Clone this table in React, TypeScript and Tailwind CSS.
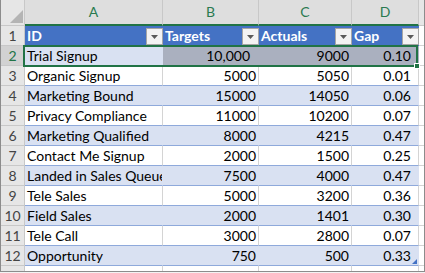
import React from 'react'

type Row = { id: string; targets: string; actuals: string; gap: string }

const rows: Row[] = [
  { id: 'Trial Signup', targets: '10,000', actuals: '9000', gap: '0.10' },
  { id: 'Organic Signup', targets: '5000', actuals: '5050', gap: '0.01' },
  { id: 'Marketing Bound', targets: '15000', actuals: '14050', gap: '0.06' },
  { id: 'Privacy Compliance', targets: '11000', actuals: '10200', gap: '0.07' },
  { id: 'Marketing Qualified', targets: '8000', actuals: '4215', gap: '0.47' },
  { id: 'Contact Me Signup', targets: '2000', actuals: '1500', gap: '0.25' },
  { id: 'Landed in Sales Queue', targets: '7500', actuals: '4000', gap: '0.47' },
  { id: 'Tele Sales', targets: '5000', actuals: '3200', gap: '0.36' },
  { id: 'Field Sales', targets: '2000', actuals: '1401', gap: '0.30' },
  { id: 'Tele Call', targets: '3000', actuals: '2800', gap: '0.07' },
  { id: 'Opportunity', targets: '750', actuals: '500', gap: '0.33' },
]

function FilterButton() {
  return (
    <div className="absolute right-0 top-[2px] w-[17px] h-[17px] bg-[#f3f3f3] border border-[#a6a6a6] flex items-center justify-center">
      <svg width="7" height="4" viewBox="0 0 7 4">
        <path d="M0 0h7L3.5 4z" fill="#5a5a5a" />
      </svg>
    </div>
  )
}

function HeaderCell({ label, w }: { label: string; w: string }) {
  return (
    <div className={`relative ${w} h-[20px] bg-[#4472c4] border-b border-[#4472c4] pl-[2px] text-white font-bold leading-[20px] overflow-hidden`}>
      {label}
      <FilterButton />
    </div>
  )
}

export default function App() {
  return (
    <div
      className="relative w-[425px] h-[273px] bg-[#f3f3f3] overflow-hidden text-[14px] text-black"
      style={{ fontFamily: 'Lato, "Liberation Sans", sans-serif' }}
    >
      <div className="w-[425px] h-[272px] border-l border-r border-b border-[#8c8c8c] bg-white overflow-hidden">
        {/* column letters */}
        <div className="flex h-[26px] bg-[#e6e6e6]">
          <div className="relative w-[24px] border-r border-b border-[#c8c8c8]">
            <svg className="absolute left-[9px] top-[10px]" width="13" height="13" viewBox="0 0 13 13">
              <path d="M13 0v13H0z" fill="#b4b4b4" />
            </svg>
          </div>
          {[
            ['A', 'w-[138px]'],
            ['B', 'w-[96px]'],
            ['C', 'w-[93px]'],
            ['D', 'w-[67px]'],
          ].map(([l, w]) => (
            <div
              key={l}
              className={`${w} flex items-end justify-center pb-[3px] leading-[18px] bg-[#dedede] text-[#2a7a50] border-r border-[#c8c8c8] border-b-2 border-b-[#217346]`}
            >
              {l}
            </div>
          ))}
          <div className="flex-1 border-b border-[#c8c8c8]" />
        </div>

        {/* header row */}
        <div className="flex h-[20px]">
          <div className="w-[24px] bg-[#e6e6e6] border-r border-b border-[#c8c8c8] text-center leading-[20px] text-[#444]">1</div>
          <HeaderCell label="ID" w="w-[138px]" />
          <HeaderCell label="Targets" w="w-[96px]" />
          <HeaderCell label="Actuals" w="w-[93px]" />
          <HeaderCell label="Gap" w="w-[67px]" />
          <div className="flex-1 border-b border-[#d4d4d4]" />
        </div>

        {rows.map((r, i) => {
          const band = i % 2 === 0
          const selected = i === 0
          const cell = band ? 'bg-[#d9e1f2] border-r-[#d9e1f2]' : 'bg-white border-r-[#d4d4d4]'
          const sel = selected ? 'bg-[#aab0bf] border-r-[#aab0bf]' : cell
          return (
            <div key={r.id} className="flex h-[20px] leading-[20px]">
              <div
                className={`w-[24px] border-r border-b border-[#c8c8c8] text-center ${selected ? 'bg-[#d2d2d2] text-[#217346]' : 'bg-[#e6e6e6] text-[#444]'}`}
              >
                {i + 2}
              </div>
              <div className={`w-[138px] pl-[2px] whitespace-nowrap overflow-hidden border-r border-b border-b-[#8ea9db] ${cell}`}>
                {r.id}
              </div>
              <div className={`w-[96px] text-right ${selected ? 'pr-[8px]' : 'pr-[2px]'} border-r border-b border-b-[#8ea9db] ${sel}`}>
                {r.targets}
              </div>
              <div className={`w-[93px] text-right pr-[2px] border-r border-b border-b-[#8ea9db] ${sel}`}>
                {r.actuals}
              </div>
              <div className={`w-[67px] text-right pr-[7px] border-r border-b border-b-[#8ea9db] ${sel} ${selected ? '' : 'border-r-[#8ea9db]'}`}>
                {r.gap}
              </div>
              <div className="flex-1 border-b border-[#d4d4d4]" />
            </div>
          )
        })}

        {/* partial next row */}
        <div className="flex h-[6px]">
          <div className="w-[24px] bg-[#e6e6e6] border-r border-[#c8c8c8]" />
          <div className="w-[138px] border-r border-[#d4d4d4]" />
          <div className="w-[96px] border-r border-[#d4d4d4]" />
          <div className="w-[93px] border-r border-[#d4d4d4]" />
          <div className="w-[67px] border-r border-[#d4d4d4]" />
        </div>
      </div>

      {/* selection box A2:D2 */}
      <div className="absolute left-[23px] top-[45px] w-[395px] h-[22px] border-2 border-[#217346]" />
      <div className="absolute left-[414px] top-[63px] w-[6px] h-[6px] bg-[#217346] border border-white" />

      {/* table resize handle */}
      <svg className="absolute left-[412px] top-[259px]" width="5" height="5" viewBox="0 0 5 5">
        <path d="M5 0v5H0z" fill="#4472c4" />
      </svg>
    </div>
  )
}
